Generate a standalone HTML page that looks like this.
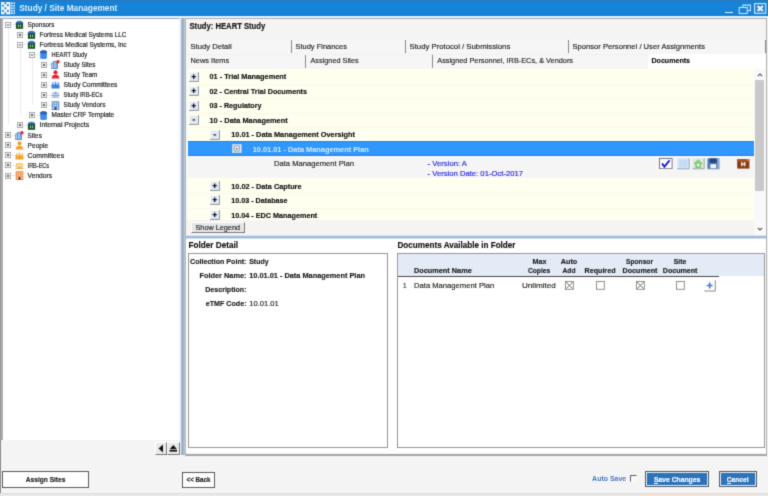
<!DOCTYPE html>
<html lang="en"><head><meta charset="utf-8"><title>Study / Site Management</title>
<style>
html,body{margin:0;padding:0;}
body{width:768px;height:496px;position:relative;overflow:hidden;background:#f4f4f4;font-family:"Liberation Sans",sans-serif;}
div,svg{position:absolute;box-sizing:border-box;}
svg text{white-space:pre;}
#labels{will-change:transform;}
#app{left:0;top:0;width:768px;height:496px;filter:url(#soft);}

.btn3d{background:#e9e9e9;border:1px solid;border-color:#fff #7a7a7a #7a7a7a #fff;}

</style></head><body>
<svg width="0" height="0" style="left:0;top:0"><defs><filter id="soft" x="0" y="0" width="100%" height="100%" color-interpolation-filters="sRGB"><feConvolveMatrix order="3" kernelMatrix="0.02 0.1 0.02 0.1 0.52 0.1 0.02 0.1 0.02" edgeMode="duplicate" preserveAlpha="true"/></filter></defs></svg>
<div id="app">
<div style="left:-4px;top:-4px;width:776px;height:504px;background:#f4f4f4;"></div>
<div style="left:-4px;top:-4px;width:776px;height:20px;background:#1683d8;"></div>
<div style="left:-4px;top:-4px;width:776px;height:5.3px;background:#2b78bf;"></div>
<div style="left:-4px;top:15.6px;width:776px;height:2.2px;background:#e6f0fb;"></div>
<svg style="left:1px;top:2px" width="14.2" height="12.6" viewBox="0 0 14.2 12.6"><rect x="0" y="0" width="9.4" height="12.4" fill="#eef6ff"/><rect x="0.95" y="2.75" width="1.9" height="1.9" fill="#3d86cc"/><rect x="5.95" y="2.25" width="1.9" height="1.9" fill="#3d86cc"/><rect x="3.3499999999999996" y="5.35" width="1.9" height="1.9" fill="#3d86cc"/><rect x="0.95" y="7.95" width="1.9" height="1.9" fill="#3d86cc"/><rect x="5.95" y="7.95" width="1.9" height="1.9" fill="#3d86cc"/><rect x="3.3499999999999996" y="0.25" width="1.9" height="1.9" fill="#3d86cc"/><rect x="3.3499999999999996" y="10.450000000000001" width="1.9" height="1.9" fill="#3d86cc"/><rect x="10" y="0.4" width="1.7" height="1.7" fill="#dcecfc"/><rect x="10" y="2.9" width="1.7" height="1.7" fill="#dcecfc"/><rect x="10" y="5.4" width="1.7" height="1.7" fill="#dcecfc"/><rect x="10" y="7.9" width="1.7" height="1.7" fill="#dcecfc"/><rect x="10" y="10.4" width="1.7" height="1.7" fill="#dcecfc"/><rect x="12.4" y="0.4" width="1.7" height="1.7" fill="#dcecfc"/><rect x="12.4" y="2.9" width="1.7" height="1.7" fill="#dcecfc"/><rect x="12.4" y="5.4" width="1.7" height="1.7" fill="#dcecfc"/><rect x="12.4" y="7.9" width="1.7" height="1.7" fill="#dcecfc"/><rect x="12.4" y="10.4" width="1.7" height="1.7" fill="#dcecfc"/></svg>
<div style="left:725.2px;top:11.6px;width:7.4px;height:1.8px;background:#d6ebff;"></div>
<svg style="left:738px;top:3.5px" width="14" height="11" viewBox="0 0 14 11" fill="none" stroke="#c4e2ff" stroke-width="1.1"><path d="M4.9 2.9V1.1H12.4V6.6H9.6"/><rect x="1.2" y="3.5" width="8" height="6"/></svg>
<svg style="left:753.8px;top:2.7px" width="13" height="11" viewBox="0 0 13 11"><rect x="0.6" y="0.6" width="11.2" height="9.7" fill="#2d82d0" stroke="#cfe8ff" stroke-width="1.1"/><path d="M3.6 3L8.8 7.9M8.8 3L3.6 7.9" stroke="#f4faff" stroke-width="2"/></svg>
<div style="left:-4px;top:17.8px;width:7px;height:421.8px;background:linear-gradient(90deg,#979797 4px,#b9b9b9);"></div>
<div style="left:-4px;top:439.5px;width:5px;height:54px;background:#8c8c8c;"></div>
<div style="left:2.5px;top:17.8px;width:177px;height:421.8px;background:#fff;border-top:1px solid #9aa9bd;border-right:1px solid #eef4fa;"></div>
<div style="left:179.5px;top:17.8px;width:6px;height:437px;background:linear-gradient(90deg,#e8f1fa 0,#dfe9f5 1.1px,#9fb2cf 1.6px,#97a9c7 2.6px,#a9b8cc 3.9px,#bcc7cc 4.4px,#cdd5d8 6px);"></div>
<div style="left:8px;top:27.5px;width:0.6px;height:97.7px;background:#ebebeb;"></div>
<div style="left:20px;top:47.64px;width:0.6px;height:67.49px;background:#ebebeb;"></div>
<div style="left:32px;top:57.71px;width:0.6px;height:47.35px;background:#ebebeb;"></div>
<div style="left:11px;top:24.2px;width:6px;height:0.6px;background:#e9e9e9;"></div>
<svg style="left:5.00px;top:21.50px" width="6" height="6" viewBox="0 0 6 6"><rect x="0.4" y="0.4" width="5.2" height="5.2" fill="#fff" stroke="#9c9c9c" stroke-width="0.8"/><path d="M1.7 3H4.3" stroke="#3a3a3a" stroke-width="0.9"/></svg>
<svg style="left:14.90px;top:20.00px" width="9" height="9" viewBox="0 0 9 9"><path d="M0.9 3.4V2.2Q4.5 -0.6 8.1 2.2V3.4Z" fill="#2f7fc4"/><rect x="0.9" y="3" width="7.2" height="5.8" fill="#1e4d24"/><rect x="2.9" y="4.6" width="1" height="2.6" fill="#a6d6a4"/><rect x="5.1" y="4.6" width="1" height="2.6" fill="#a6d6a4"/><rect x="0.9" y="2.6" width="7.2" height="0.9" fill="#1d64ae"/></svg>
<div style="left:23px;top:34.27px;width:6px;height:0.6px;background:#e9e9e9;"></div>
<svg style="left:17.00px;top:31.57px" width="6" height="6" viewBox="0 0 6 6"><rect x="0.4" y="0.4" width="5.2" height="5.2" fill="#fff" stroke="#9c9c9c" stroke-width="0.8"/><path d="M1.7 3H4.3" stroke="#3a3a3a" stroke-width="0.9"/><path d="M3 1.6V4.4" stroke="#333" stroke-width="0.9"/></svg>
<svg style="left:26.90px;top:30.07px" width="9" height="9" viewBox="0 0 9 9"><path d="M0.9 3.4V2.2Q4.5 -0.6 8.1 2.2V3.4Z" fill="#2f7fc4"/><rect x="0.9" y="3" width="7.2" height="5.8" fill="#1e4d24"/><rect x="2.9" y="4.6" width="1" height="2.6" fill="#a6d6a4"/><rect x="5.1" y="4.6" width="1" height="2.6" fill="#a6d6a4"/><rect x="0.9" y="2.6" width="7.2" height="0.9" fill="#1d64ae"/></svg>
<div style="left:23px;top:44.34px;width:6px;height:0.6px;background:#e9e9e9;"></div>
<svg style="left:17.00px;top:41.64px" width="6" height="6" viewBox="0 0 6 6"><rect x="0.4" y="0.4" width="5.2" height="5.2" fill="#fff" stroke="#9c9c9c" stroke-width="0.8"/><path d="M1.7 3H4.3" stroke="#3a3a3a" stroke-width="0.9"/></svg>
<svg style="left:26.90px;top:40.14px" width="9" height="9" viewBox="0 0 9 9"><path d="M0.9 3.4V2.2Q4.5 -0.6 8.1 2.2V3.4Z" fill="#2f7fc4"/><rect x="0.9" y="3" width="7.2" height="5.8" fill="#1e4d24"/><rect x="2.9" y="4.6" width="1" height="2.6" fill="#a6d6a4"/><rect x="5.1" y="4.6" width="1" height="2.6" fill="#a6d6a4"/><rect x="0.9" y="2.6" width="7.2" height="0.9" fill="#1d64ae"/></svg>
<div style="left:35px;top:54.410000000000004px;width:6px;height:0.6px;background:#e9e9e9;"></div>
<svg style="left:29.00px;top:51.71px" width="6" height="6" viewBox="0 0 6 6"><rect x="0.4" y="0.4" width="5.2" height="5.2" fill="#fff" stroke="#9c9c9c" stroke-width="0.8"/><path d="M1.7 3H4.3" stroke="#3a3a3a" stroke-width="0.9"/></svg>
<svg style="left:38.90px;top:50.21px" width="9" height="9" viewBox="0 0 9 9"><path d="M1.2 1.2Q4.5 -0.8 7.9 1.2V8.4Q4.5 9.8 1.2 8.4Z" fill="#4489ec"/><path d="M1.2 1.2Q4.5 -0.8 7.9 1.2V2.9Q4.5 4 1.2 2.9Z" fill="#2c5fb4"/></svg>
<div style="left:47px;top:64.48px;width:6px;height:0.6px;background:#e9e9e9;"></div>
<svg style="left:41.00px;top:61.78px" width="6" height="6" viewBox="0 0 6 6"><rect x="0.4" y="0.4" width="5.2" height="5.2" fill="#fff" stroke="#9c9c9c" stroke-width="0.8"/><path d="M1.7 3H4.3" stroke="#3a3a3a" stroke-width="0.9"/><path d="M3 1.6V4.4" stroke="#333" stroke-width="0.9"/></svg>
<svg style="left:50.90px;top:60.28px" width="9" height="9" viewBox="0 0 9 9"><rect x="0.8" y="3" width="5.6" height="5.6" fill="#cfe2f7" stroke="#4a86cf" stroke-width="0.9"/><rect x="2.6" y="1.4" width="2.6" height="7" fill="#9cc3ee" stroke="#4a86cf" stroke-width="0.7"/><circle cx="7" cy="1.8" r="1.7" fill="#e8222e"/></svg>
<div style="left:47px;top:74.55px;width:6px;height:0.6px;background:#e9e9e9;"></div>
<svg style="left:41.00px;top:71.85px" width="6" height="6" viewBox="0 0 6 6"><rect x="0.4" y="0.4" width="5.2" height="5.2" fill="#fff" stroke="#9c9c9c" stroke-width="0.8"/><path d="M1.7 3H4.3" stroke="#3a3a3a" stroke-width="0.9"/><path d="M3 1.6V4.4" stroke="#333" stroke-width="0.9"/></svg>
<svg style="left:50.90px;top:70.35px" width="9" height="9" viewBox="0 0 9 9"><circle cx="4.5" cy="2.4" r="2.1" fill="#e8202a"/><path d="M0.6 8.6Q0.8 4.8 4.5 4.8Q8.2 4.8 8.4 8.6Z" fill="#e8202a"/></svg>
<div style="left:47px;top:84.62px;width:6px;height:0.6px;background:#e9e9e9;"></div>
<svg style="left:41.00px;top:81.92px" width="6" height="6" viewBox="0 0 6 6"><rect x="0.4" y="0.4" width="5.2" height="5.2" fill="#fff" stroke="#9c9c9c" stroke-width="0.8"/><path d="M1.7 3H4.3" stroke="#3a3a3a" stroke-width="0.9"/><path d="M3 1.6V4.4" stroke="#333" stroke-width="0.9"/></svg>
<svg style="left:50.90px;top:80.42px" width="9" height="9" viewBox="0 0 9 9"><path d="M0.5 8.5V5.6L1.7 2.8L2.9 5.2L4.5 2L6.1 5.2L7.3 2.8L8.5 5.6V8.5Z" fill="#3f7fd6"/><circle cx="1.7" cy="3.3" r="1" fill="#7fa9e6"/><circle cx="4.5" cy="2.6" r="1.1" fill="#7fa9e6"/><circle cx="7.3" cy="3.3" r="1" fill="#7fa9e6"/></svg>
<div style="left:47px;top:94.69000000000001px;width:6px;height:0.6px;background:#e9e9e9;"></div>
<svg style="left:41.00px;top:91.99px" width="6" height="6" viewBox="0 0 6 6"><rect x="0.4" y="0.4" width="5.2" height="5.2" fill="#fff" stroke="#9c9c9c" stroke-width="0.8"/><path d="M1.7 3H4.3" stroke="#3a3a3a" stroke-width="0.9"/><path d="M3 1.6V4.4" stroke="#333" stroke-width="0.9"/></svg>
<svg style="left:50.90px;top:90.49px" width="9" height="9" viewBox="0 0 9 9"><circle cx="4.5" cy="3" r="1.3" fill="#6f98d4"/><circle cx="1.9" cy="3.3" r="1" fill="#a9c0e2"/><circle cx="7.1" cy="3.3" r="1" fill="#a9c0e2"/><rect x="0.6" y="4.7" width="7.8" height="1.2" fill="#6f98d4"/><path d="M0.4 7.9Q0.8 6 4.5 6Q8.2 6 8.6 7.9Z" fill="#a9c0e2"/></svg>
<div style="left:47px;top:104.76px;width:6px;height:0.6px;background:#e9e9e9;"></div>
<svg style="left:41.00px;top:102.06px" width="6" height="6" viewBox="0 0 6 6"><rect x="0.4" y="0.4" width="5.2" height="5.2" fill="#fff" stroke="#9c9c9c" stroke-width="0.8"/><path d="M1.7 3H4.3" stroke="#3a3a3a" stroke-width="0.9"/><path d="M3 1.6V4.4" stroke="#333" stroke-width="0.9"/></svg>
<svg style="left:50.90px;top:100.56px" width="9" height="9" viewBox="0 0 9 9"><rect x="1.2" y="0.8" width="6.6" height="7.8" fill="#dbe8f8" stroke="#4a7fc4" stroke-width="0.9"/><path d="M3.4 0.8V8.6M5.6 0.8V8.6M1.2 3.2H7.8M1.2 5.6H7.8" stroke="#4a7fc4" stroke-width="0.6"/><rect x="3.6" y="6.2" width="1.8" height="2.4" fill="#22324a"/></svg>
<div style="left:35px;top:114.83px;width:6px;height:0.6px;background:#e9e9e9;"></div>
<svg style="left:29.00px;top:112.13px" width="6" height="6" viewBox="0 0 6 6"><rect x="0.4" y="0.4" width="5.2" height="5.2" fill="#fff" stroke="#9c9c9c" stroke-width="0.8"/><path d="M1.7 3H4.3" stroke="#3a3a3a" stroke-width="0.9"/><path d="M3 1.6V4.4" stroke="#333" stroke-width="0.9"/></svg>
<svg style="left:38.90px;top:110.63px" width="9" height="9" viewBox="0 0 9 9"><path d="M1.2 1.2Q4.5 -0.8 7.9 1.2V8.4Q4.5 9.8 1.2 8.4Z" fill="#4489ec"/><path d="M1.2 1.2Q4.5 -0.8 7.9 1.2V2.9Q4.5 4 1.2 2.9Z" fill="#2c5fb4"/></svg>
<div style="left:23px;top:124.9px;width:6px;height:0.6px;background:#e9e9e9;"></div>
<svg style="left:17.00px;top:122.20px" width="6" height="6" viewBox="0 0 6 6"><rect x="0.4" y="0.4" width="5.2" height="5.2" fill="#fff" stroke="#9c9c9c" stroke-width="0.8"/><path d="M1.7 3H4.3" stroke="#3a3a3a" stroke-width="0.9"/><path d="M3 1.6V4.4" stroke="#333" stroke-width="0.9"/></svg>
<svg style="left:26.90px;top:120.70px" width="9" height="9" viewBox="0 0 9 9"><path d="M0.9 3.4V2.2Q4.5 -0.6 8.1 2.2V3.4Z" fill="#2f7fc4"/><rect x="0.9" y="3" width="7.2" height="5.8" fill="#1e4d24"/><rect x="2.9" y="4.6" width="1" height="2.6" fill="#a6d6a4"/><rect x="5.1" y="4.6" width="1" height="2.6" fill="#a6d6a4"/><rect x="0.9" y="2.6" width="7.2" height="0.9" fill="#1d64ae"/></svg>
<div style="left:11px;top:134.97px;width:6px;height:0.6px;background:#e9e9e9;"></div>
<svg style="left:5.00px;top:132.27px" width="6" height="6" viewBox="0 0 6 6"><rect x="0.4" y="0.4" width="5.2" height="5.2" fill="#fff" stroke="#9c9c9c" stroke-width="0.8"/><path d="M1.7 3H4.3" stroke="#3a3a3a" stroke-width="0.9"/><path d="M3 1.6V4.4" stroke="#333" stroke-width="0.9"/></svg>
<svg style="left:14.90px;top:130.77px" width="9" height="9" viewBox="0 0 9 9"><rect x="0.8" y="3" width="5.6" height="5.6" fill="#cfe2f7" stroke="#4a86cf" stroke-width="0.9"/><rect x="2.6" y="1.4" width="2.6" height="7" fill="#9cc3ee" stroke="#4a86cf" stroke-width="0.7"/><circle cx="7" cy="1.8" r="1.7" fill="#e8222e"/></svg>
<div style="left:11px;top:145.04px;width:6px;height:0.6px;background:#e9e9e9;"></div>
<svg style="left:5.00px;top:142.34px" width="6" height="6" viewBox="0 0 6 6"><rect x="0.4" y="0.4" width="5.2" height="5.2" fill="#fff" stroke="#9c9c9c" stroke-width="0.8"/><path d="M1.7 3H4.3" stroke="#3a3a3a" stroke-width="0.9"/><path d="M3 1.6V4.4" stroke="#333" stroke-width="0.9"/></svg>
<svg style="left:14.90px;top:140.84px" width="9" height="9" viewBox="0 0 9 9"><circle cx="4.5" cy="2.4" r="2.1" fill="#f2a030"/><path d="M0.6 8.6Q0.8 4.8 4.5 4.8Q8.2 4.8 8.4 8.6Z" fill="#f2a030"/></svg>
<div style="left:11px;top:155.10999999999999px;width:6px;height:0.6px;background:#e9e9e9;"></div>
<svg style="left:5.00px;top:152.41px" width="6" height="6" viewBox="0 0 6 6"><rect x="0.4" y="0.4" width="5.2" height="5.2" fill="#fff" stroke="#9c9c9c" stroke-width="0.8"/><path d="M1.7 3H4.3" stroke="#3a3a3a" stroke-width="0.9"/><path d="M3 1.6V4.4" stroke="#333" stroke-width="0.9"/></svg>
<svg style="left:14.90px;top:150.91px" width="9" height="9" viewBox="0 0 9 9"><path d="M0.5 8.5V5.6L1.7 2.8L2.9 5.2L4.5 2L6.1 5.2L7.3 2.8L8.5 5.6V8.5Z" fill="#f2a22e"/><circle cx="1.7" cy="3.3" r="1" fill="#f6bd62"/><circle cx="4.5" cy="2.6" r="1.1" fill="#f6bd62"/><circle cx="7.3" cy="3.3" r="1" fill="#f6bd62"/></svg>
<div style="left:11px;top:165.18px;width:6px;height:0.6px;background:#e9e9e9;"></div>
<svg style="left:5.00px;top:162.48px" width="6" height="6" viewBox="0 0 6 6"><rect x="0.4" y="0.4" width="5.2" height="5.2" fill="#fff" stroke="#9c9c9c" stroke-width="0.8"/><path d="M1.7 3H4.3" stroke="#3a3a3a" stroke-width="0.9"/><path d="M3 1.6V4.4" stroke="#333" stroke-width="0.9"/></svg>
<svg style="left:14.90px;top:160.98px" width="9" height="9" viewBox="0 0 9 9"><circle cx="4.5" cy="3" r="1.3" fill="#f6c070"/><circle cx="1.9" cy="3.3" r="1" fill="#f4ae48"/><circle cx="7.1" cy="3.3" r="1" fill="#f4ae48"/><rect x="0.6" y="4.7" width="7.8" height="1.2" fill="#f6c070"/><path d="M0.4 7.9Q0.8 6 4.5 6Q8.2 6 8.6 7.9Z" fill="#f4ae48"/></svg>
<div style="left:11px;top:175.25px;width:6px;height:0.6px;background:#e9e9e9;"></div>
<svg style="left:5.00px;top:172.55px" width="6" height="6" viewBox="0 0 6 6"><rect x="0.4" y="0.4" width="5.2" height="5.2" fill="#fff" stroke="#9c9c9c" stroke-width="0.8"/><path d="M1.7 3H4.3" stroke="#3a3a3a" stroke-width="0.9"/><path d="M3 1.6V4.4" stroke="#333" stroke-width="0.9"/></svg>
<svg style="left:14.90px;top:171.05px" width="9" height="9" viewBox="0 0 9 9"><rect x="1.2" y="0.8" width="6.6" height="7.8" fill="#fbd9b8" stroke="#e9772a" stroke-width="0.9"/><path d="M3.4 0.8V8.6M5.6 0.8V8.6M1.2 3.2H7.8M1.2 5.6H7.8" stroke="#e9772a" stroke-width="0.6"/><rect x="3.6" y="6.2" width="1.8" height="2.4" fill="#22324a"/></svg>
<div class="btn3d" style="left:155px;top:441.5px;width:12px;height:13px;"></div>
<div class="btn3d" style="left:167px;top:441.5px;width:12.5px;height:13px;"></div>
<svg style="left:155px;top:441.5px" width="25" height="13" viewBox="0 0 25 13"><path d="M8 2.6V10.4L3.6 6.5Z" fill="#111"/><path d="M14.6 7.2L18.3 3L22 7.2Z" fill="#111"/><rect x="14.6" y="8" width="7.4" height="1.6" fill="#111"/></svg>
<div style="left:2.2px;top:471.3px;width:87.3px;height:16.3px;background:#fff;border:1px solid #5a5a5a;"></div>
<div style="left:181.5px;top:471.5px;width:33.3px;height:16px;background:#fff;border:1px solid #5a5a5a;"></div>
<div style="left:-4px;top:493px;width:776px;height:7px;background:#e9e9e9;border-top:1px solid #dcdcdc;"></div>
<div style="left:640px;top:494.4px;width:117px;height:5.6px;background:#f4e3d8;"></div>
<div style="left:185px;top:18px;width:582px;height:437.5px;background:#f5f4f3;border:1px solid #b0b0b0;border-left-color:#b2b6b8;border-bottom:2.6px solid #a6a6a6;"></div>
<div style="left:186px;top:39.5px;width:580px;height:14.7px;background:#f6f6f6;"></div>
<div style="left:186px;top:54.2px;width:580px;height:14.8px;background:#f6f6f6;border-top:1px solid #f1f1f1;"></div>
<div style="left:290.7px;top:40px;width:1px;height:13.2px;background:#8a8a8a;"></div>
<div style="left:404.7px;top:40px;width:1px;height:13.2px;background:#8a8a8a;"></div>
<div style="left:567.7px;top:40px;width:1px;height:13.2px;background:#8a8a8a;"></div>
<div style="left:764.7px;top:40px;width:1px;height:13.2px;background:#8a8a8a;"></div>
<div style="left:305.2px;top:54.6px;width:1px;height:13.2px;background:#8a8a8a;"></div>
<div style="left:432.2px;top:54.6px;width:1px;height:13.2px;background:#8a8a8a;"></div>
<div style="left:648px;top:54.4px;width:117.5px;height:15px;background:#fff;"></div>
<div style="left:186px;top:69px;width:2px;height:151px;background:#f6f9fc;"></div>
<div style="left:188px;top:69px;width:566px;height:151px;background:#fffff0;"></div>
<div style="left:754px;top:69px;width:12px;height:166px;background:#f9f9f9;"></div>
<div style="left:755px;top:80px;width:9px;height:111px;background:#c9c9c9;"></div>
<svg style="left:756px;top:72px" width="8" height="6" viewBox="0 0 8 6"><path d="M1.8 4.2L4 2L6.2 4.2" stroke="#5a5a5a" stroke-width="1.1" fill="none"/></svg>
<svg style="left:756px;top:225.5px" width="8" height="6" viewBox="0 0 8 6"><path d="M1.8 1.8L4 4L6.2 1.8" stroke="#5a5a5a" stroke-width="1.1" fill="none"/></svg>
<div style="left:188px;top:83.85px;width:566px;height:0.7px;background:#fafaec;"></div>
<div style="left:188px;top:98.35px;width:566px;height:0.7px;background:#fafaec;"></div>
<div style="left:188px;top:112.85px;width:566px;height:0.7px;background:#fafaec;"></div>
<div style="left:188px;top:127.35px;width:566px;height:0.7px;background:#fafaec;"></div>
<div style="left:188px;top:141.85px;width:566px;height:0.7px;background:#fafaec;"></div>
<div style="left:188px;top:193.35px;width:566px;height:0.7px;background:#fafaec;"></div>
<div style="left:188px;top:207.7px;width:566px;height:0.7px;background:#fafaec;"></div>
<svg style="left:188.6px;top:71.55px" width="10" height="10" viewBox="0 0 10 10"><rect x="0" y="0" width="9.6" height="9.4" fill="#e5e9ef"/><path d="M0 9.4H9.6V0" stroke="#8d949e" stroke-width="1" fill="none"/><path d="M0.3 9V0.3H9.2" stroke="#fff" stroke-width="0.8" fill="none"/><path d="M2.6 4.7H6.8M4.7 2.4V7" stroke="#0a1a3a" stroke-width="1.3"/></svg>
<svg style="left:188.6px;top:86.05px" width="10" height="10" viewBox="0 0 10 10"><rect x="0" y="0" width="9.6" height="9.4" fill="#e5e9ef"/><path d="M0 9.4H9.6V0" stroke="#8d949e" stroke-width="1" fill="none"/><path d="M0.3 9V0.3H9.2" stroke="#fff" stroke-width="0.8" fill="none"/><path d="M2.6 4.7H6.8M4.7 2.4V7" stroke="#0a1a3a" stroke-width="1.3"/></svg>
<svg style="left:188.6px;top:100.55px" width="10" height="10" viewBox="0 0 10 10"><rect x="0" y="0" width="9.6" height="9.4" fill="#e5e9ef"/><path d="M0 9.4H9.6V0" stroke="#8d949e" stroke-width="1" fill="none"/><path d="M0.3 9V0.3H9.2" stroke="#fff" stroke-width="0.8" fill="none"/><path d="M2.6 4.7H6.8M4.7 2.4V7" stroke="#0a1a3a" stroke-width="1.3"/></svg>
<svg style="left:188.6px;top:115.05px" width="10" height="10" viewBox="0 0 10 10"><rect x="0" y="0" width="9.6" height="9.4" fill="#e5e9ef"/><path d="M0 9.4H9.6V0" stroke="#8d949e" stroke-width="1" fill="none"/><path d="M0.3 9V0.3H9.2" stroke="#fff" stroke-width="0.8" fill="none"/><path d="M3.5 4.9H6.1" stroke="#0a1a3a" stroke-width="1.2"/></svg>
<svg style="left:210.1px;top:129.55px" width="10" height="10" viewBox="0 0 10 10"><rect x="0" y="0" width="9.6" height="9.4" fill="#e5e9ef"/><path d="M0 9.4H9.6V0" stroke="#8d949e" stroke-width="1" fill="none"/><path d="M0.3 9V0.3H9.2" stroke="#fff" stroke-width="0.8" fill="none"/><path d="M3.5 4.9H6.1" stroke="#0a1a3a" stroke-width="1.2"/></svg>
<svg style="left:210.1px;top:181.05px" width="10" height="10" viewBox="0 0 10 10"><rect x="0" y="0" width="9.6" height="9.4" fill="#e5e9ef"/><path d="M0 9.4H9.6V0" stroke="#8d949e" stroke-width="1" fill="none"/><path d="M0.3 9V0.3H9.2" stroke="#fff" stroke-width="0.8" fill="none"/><path d="M2.6 4.7H6.8M4.7 2.4V7" stroke="#0a1a3a" stroke-width="1.3"/></svg>
<svg style="left:210.1px;top:195.4px" width="10" height="10" viewBox="0 0 10 10"><rect x="0" y="0" width="9.6" height="9.4" fill="#e5e9ef"/><path d="M0 9.4H9.6V0" stroke="#8d949e" stroke-width="1" fill="none"/><path d="M0.3 9V0.3H9.2" stroke="#fff" stroke-width="0.8" fill="none"/><path d="M2.6 4.7H6.8M4.7 2.4V7" stroke="#0a1a3a" stroke-width="1.3"/></svg>
<svg style="left:210.1px;top:209.8px" width="10" height="10" viewBox="0 0 10 10"><rect x="0" y="0" width="9.6" height="9.4" fill="#e5e9ef"/><path d="M0 9.4H9.6V0" stroke="#8d949e" stroke-width="1" fill="none"/><path d="M0.3 9V0.3H9.2" stroke="#fff" stroke-width="0.8" fill="none"/><path d="M2.6 4.7H6.8M4.7 2.4V7" stroke="#0a1a3a" stroke-width="1.3"/></svg>
<div style="left:188px;top:141.3px;width:566px;height:14.3px;background:#3097fd;border-top:0.7px solid #2c84dc;border-bottom:0.7px solid #2c84dc;"></div>
<svg style="left:231.5px;top:144.3px" width="10" height="9" viewBox="0 0 10 9"><rect x="0.4" y="0.4" width="8.8" height="8.2" fill="#e9eef5" stroke="#c8d4e4" stroke-width="0.8"/><rect x="2.2" y="2" width="5" height="5" fill="#fff" stroke="#6a7fa0" stroke-width="0.8"/><path d="M3.4 4.2H6.2L4.8 5.8Z" fill="#223a6a"/></svg>
<div style="left:188px;top:155.7px;width:566px;height:22.3px;background:#f5f5f5;"></div>
<svg style="left:659px;top:157.5px" width="14" height="11.5" viewBox="0 0 14 11.5"><rect x="0.5" y="0.5" width="12.6" height="10.2" fill="#fff" stroke="#6c6c78" stroke-width="0.9"/><path d="M3 5.4L5.4 8.6L10.6 2.4" stroke="#2020cc" stroke-width="1.9" fill="none"/></svg>
<svg style="left:677px;top:158px" width="13" height="11.5" viewBox="0 0 13 11.5"><rect x="0.3" y="0.3" width="11.8" height="10.4" fill="#d9e8f8"/><rect x="1.8" y="1.6" width="8.6" height="7.6" fill="#c3dcf6"/><path d="M0.3 10.8H12.2V0.3" stroke="#98a4b2" stroke-width="1" fill="none"/></svg>
<svg style="left:692px;top:158px" width="13" height="11.5" viewBox="0 0 13 11.5"><rect x="0.3" y="0.3" width="11.8" height="10.4" fill="#e3eadf"/><path d="M6.2 1.8L10.2 5.6H8.6V9.4H3.8V5.6H2.2Z" fill="#86d67e" stroke="#58b254" stroke-width="0.6"/><rect x="5" y="6" width="2.4" height="2.2" fill="#eef8ec"/><path d="M0.3 10.8H12.2V0.3" stroke="#98a49c" stroke-width="1" fill="none"/></svg>
<svg style="left:707px;top:158px" width="13" height="11.5" viewBox="0 0 13 11.5"><rect x="0.4" y="0.4" width="12" height="10.4" fill="#4a7cc4"/><rect x="2.8" y="0.4" width="6.8" height="4.4" fill="#24457c"/><rect x="3.4" y="6.2" width="5.8" height="4" fill="#f2f6fb"/><rect x="10.6" y="0.4" width="1.8" height="10.4" fill="#9db6d8"/><path d="M0.4 10.9H12.4" stroke="#8a98ac" stroke-width="0.8"/></svg>
<svg style="left:737px;top:158.6px" width="13" height="10" viewBox="0 0 13 10"><rect x="0.2" y="0.2" width="12.2" height="9.4" fill="#8b3a12"/><rect x="0.2" y="0.2" width="12.2" height="2.4" fill="#aa531f"/><path d="M9.6 0.2H12.4V3Z" fill="#d9a37c"/><path d="M4.8 3V7.2M7.8 3V7.2M4.8 5.1H7.8" stroke="#fff" stroke-width="1.2"/></svg>
<div class="btn3d" style="left:191px;top:221.7px;width:53.6px;height:11.2px;background:#e6e6e6;"></div>
<div style="left:186px;top:234.5px;width:580px;height:4.3px;background:linear-gradient(180deg,#e9eef5 0,#bfd3ec 30%,#7fa3cf 50%,#9fbbe0 65%,#f2f6fb 100%);"></div>
<div style="left:186px;top:238.5px;width:580px;height:214px;background:#fff;"></div>
<div style="left:188px;top:253.3px;width:199.8px;height:195px;background:#fff;border:1px solid #969696;"></div>
<div style="left:397px;top:253.3px;width:368.2px;height:195px;background:#fff;border:1px solid #969696;"></div>
<div style="left:398px;top:254.3px;width:366.2px;height:22px;background:#e3ebf6;"></div>
<div style="left:398px;top:275.8px;width:320.5px;height:1px;background:#4a4a4a;"></div>
<svg style="left:565.2px;top:280.7px" width="9" height="9" viewBox="0 0 9 9"><rect x="0.5" y="0.5" width="7.8" height="7.8" fill="#fff" stroke="#858585" stroke-width="0.9"/><path d="M1.2 1.2L7.6 7.6M7.6 1.2L1.2 7.6" stroke="#4a4a4a" stroke-width="0.8"/></svg>
<svg style="left:596px;top:280.7px" width="9" height="9" viewBox="0 0 9 9"><rect x="0.5" y="0.5" width="7.8" height="7.8" fill="#fff" stroke="#858585" stroke-width="0.9"/></svg>
<svg style="left:635.7px;top:280.7px" width="9" height="9" viewBox="0 0 9 9"><rect x="0.5" y="0.5" width="7.8" height="7.8" fill="#fff" stroke="#858585" stroke-width="0.9"/><path d="M1.2 1.2L7.6 7.6M7.6 1.2L1.2 7.6" stroke="#4a4a4a" stroke-width="0.8"/></svg>
<svg style="left:675.7px;top:280.7px" width="9" height="9" viewBox="0 0 9 9"><rect x="0.5" y="0.5" width="7.8" height="7.8" fill="#fff" stroke="#858585" stroke-width="0.9"/></svg>
<svg style="left:704.3px;top:279.8px" width="12" height="12" viewBox="0 0 12 12"><rect x="0" y="0" width="11.6" height="11.4" fill="#fdfdfd"/><path d="M0.3 11H11.3V0.3" stroke="#8a8a8a" stroke-width="1" fill="none"/><path d="M2.8 5.4H8.6M5.7 2.4V8.4" stroke="#3f78d0" stroke-width="1.5"/></svg>
<div style="left:629.7px;top:475px;width:7.2px;height:6.6px;background:#f7f7f7;border:1px solid;border-color:#606060 #f9f9f9 #f9f9f9 #606060;"></div>
<div style="left:644.6px;top:471.4px;width:64.8px;height:16px;background:#2d73ba;border:1px solid #505860;box-shadow:inset 0 0 0 1px #e4edf8;"></div>
<div style="left:654.3px;top:482.6px;width:3.6px;height:0.7px;background:#fff;"></div>
<div style="left:718.9px;top:471.4px;width:37.8px;height:16px;background:#2d73ba;border:1px solid #505860;box-shadow:inset 0 0 0 1px #e4edf8;"></div>
<div style="left:727.05px;top:482.6px;width:3.6px;height:0.7px;background:#fff;"></div>
<svg id="labels" style="left:0;top:0" width="768" height="496" viewBox="0 0 768 496" font-family="Liberation Sans, sans-serif">
<text x="19.30" y="11" font-size="9.25" fill="#dcefff" textLength="98.00" lengthAdjust="spacingAndGlyphs" font-weight="bold">Study / Site Management</text>
<text x="27.60" y="27" font-size="7" fill="#262626" textLength="26.75" lengthAdjust="spacingAndGlyphs" stroke="#262626" stroke-width="0.2">Sponsors</text>
<text x="39.60" y="37" font-size="7" fill="#262626" textLength="86.75" lengthAdjust="spacingAndGlyphs" stroke="#262626" stroke-width="0.2">Fortress Medical Systems LLC</text>
<text x="39.60" y="47" font-size="7" fill="#262626" textLength="87.00" lengthAdjust="spacingAndGlyphs" stroke="#262626" stroke-width="0.2">Fortress Medical Systems, Inc</text>
<text x="51.60" y="57" font-size="7" fill="#262626" textLength="35.50" lengthAdjust="spacingAndGlyphs" stroke="#262626" stroke-width="0.2">HEART Study</text>
<text x="63.60" y="67" font-size="7" fill="#262626" textLength="31.75" lengthAdjust="spacingAndGlyphs" stroke="#262626" stroke-width="0.2">Study Sites</text>
<text x="63.60" y="77" font-size="7" fill="#262626" textLength="33.75" lengthAdjust="spacingAndGlyphs" stroke="#262626" stroke-width="0.2">Study Team</text>
<text x="63.60" y="87" font-size="7" fill="#262626" textLength="53.75" lengthAdjust="spacingAndGlyphs" stroke="#262626" stroke-width="0.2">Study Committees</text>
<text x="63.60" y="97" font-size="7" fill="#262626" textLength="38.75" lengthAdjust="spacingAndGlyphs" stroke="#262626" stroke-width="0.2">Study IRB-ECs</text>
<text x="63.60" y="107" font-size="7" fill="#262626" textLength="41.75" lengthAdjust="spacingAndGlyphs" stroke="#262626" stroke-width="0.2">Study Vendors</text>
<text x="51.60" y="117" font-size="7" fill="#262626" textLength="62.50" lengthAdjust="spacingAndGlyphs" stroke="#262626" stroke-width="0.2">Master CRF Template</text>
<text x="39.60" y="127" font-size="7" fill="#262626" textLength="49.50" lengthAdjust="spacingAndGlyphs" stroke="#262626" stroke-width="0.2">Internal Projects</text>
<text x="27.60" y="138" font-size="7" fill="#262626" textLength="14.25" lengthAdjust="spacingAndGlyphs" stroke="#262626" stroke-width="0.2">Sites</text>
<text x="27.60" y="148" font-size="7" fill="#262626" textLength="20.50" lengthAdjust="spacingAndGlyphs" stroke="#262626" stroke-width="0.2">People</text>
<text x="27.60" y="158" font-size="7" fill="#262626" textLength="36.50" lengthAdjust="spacingAndGlyphs" stroke="#262626" stroke-width="0.2">Committees</text>
<text x="27.60" y="168" font-size="7" fill="#262626" textLength="21.50" lengthAdjust="spacingAndGlyphs" stroke="#262626" stroke-width="0.2">IRB-ECs</text>
<text x="27.60" y="178" font-size="7" fill="#262626" textLength="24.50" lengthAdjust="spacingAndGlyphs" stroke="#262626" stroke-width="0.2">Vendors</text>
<text x="25.80" y="482" font-size="8" fill="#1a1a1a" textLength="39.60" lengthAdjust="spacingAndGlyphs" font-weight="bold" stroke="#1a1a1a" stroke-width="0.16">Assign Sites</text>
<text x="186.50" y="482" font-size="8" fill="#1a1a1a" textLength="24.00" lengthAdjust="spacingAndGlyphs" font-weight="bold" stroke="#1a1a1a" stroke-width="0.16">&lt;&lt; Back</text>
<text x="189.50" y="29" font-size="9.25" fill="#111" textLength="75.75" lengthAdjust="spacingAndGlyphs" font-weight="bold" stroke="#111" stroke-width="0.16">Study: HEART Study</text>
<text x="190.50" y="49" font-size="8" fill="#1c1c1c" textLength="41.20" lengthAdjust="spacingAndGlyphs" stroke="#1c1c1c" stroke-width="0.14">Study Detail</text>
<text x="295.50" y="49" font-size="8" fill="#1c1c1c" textLength="51.50" lengthAdjust="spacingAndGlyphs" stroke="#1c1c1c" stroke-width="0.14">Study Finances</text>
<text x="409.50" y="49" font-size="8" fill="#1c1c1c" textLength="100.80" lengthAdjust="spacingAndGlyphs" stroke="#1c1c1c" stroke-width="0.14">Study Protocol / Submissions</text>
<text x="572.50" y="49" font-size="8" fill="#1c1c1c" textLength="132.50" lengthAdjust="spacingAndGlyphs" stroke="#1c1c1c" stroke-width="0.14">Sponsor Personnel / User Assignments</text>
<text x="190.50" y="63" font-size="8" fill="#1c1c1c" textLength="38.70" lengthAdjust="spacingAndGlyphs" stroke="#1c1c1c" stroke-width="0.14">News Items</text>
<text x="310.50" y="63" font-size="8" fill="#1c1c1c" textLength="48.25" lengthAdjust="spacingAndGlyphs" stroke="#1c1c1c" stroke-width="0.14">Assigned Sites</text>
<text x="437.25" y="63" font-size="8" fill="#1c1c1c" textLength="135.75" lengthAdjust="spacingAndGlyphs" stroke="#1c1c1c" stroke-width="0.14">Assigned Personnel, IRB-ECs, &amp; Vendors</text>
<text x="651.50" y="63" font-size="7.75" fill="#111" textLength="38.50" lengthAdjust="spacingAndGlyphs" font-weight="bold" stroke="#111" stroke-width="0.16">Documents</text>
<text x="209.50" y="79" font-size="7.75" fill="#111" textLength="76.75" lengthAdjust="spacingAndGlyphs" font-weight="bold" stroke="#111" stroke-width="0.16">01 - Trial Management</text>
<text x="209.50" y="94" font-size="7.75" fill="#111" textLength="97.50" lengthAdjust="spacingAndGlyphs" font-weight="bold" stroke="#111" stroke-width="0.16">02 - Central Trial Documents</text>
<text x="209.50" y="108" font-size="7.75" fill="#111" textLength="52.00" lengthAdjust="spacingAndGlyphs" font-weight="bold" stroke="#111" stroke-width="0.16">03 - Regulatory</text>
<text x="209.50" y="123" font-size="7.75" fill="#111" textLength="78.25" lengthAdjust="spacingAndGlyphs" font-weight="bold" stroke="#111" stroke-width="0.16">10 - Data Management</text>
<text x="231.25" y="137" font-size="7.75" fill="#111" textLength="123.75" lengthAdjust="spacingAndGlyphs" font-weight="bold" stroke="#111" stroke-width="0.16">10.01 - Data Management Oversight</text>
<text x="231.25" y="189" font-size="7.75" fill="#111" textLength="70.25" lengthAdjust="spacingAndGlyphs" font-weight="bold" stroke="#111" stroke-width="0.16">10.02 - Data Capture</text>
<text x="231.25" y="203" font-size="7.75" fill="#111" textLength="56.25" lengthAdjust="spacingAndGlyphs" font-weight="bold" stroke="#111" stroke-width="0.16">10.03 - Database</text>
<text x="231.25" y="218" font-size="7.75" fill="#111" textLength="86.00" lengthAdjust="spacingAndGlyphs" font-weight="bold" stroke="#111" stroke-width="0.16">10.04 - EDC Management</text>
<text x="252.75" y="152" font-size="7.75" fill="#d6ebff" textLength="116.00" lengthAdjust="spacingAndGlyphs" font-weight="bold">10.01.01 - Data Management Plan</text>
<text x="274.00" y="166" font-size="8" fill="#1c1c1c" textLength="80.00" lengthAdjust="spacingAndGlyphs" stroke="#1c1c1c" stroke-width="0.14">Data Management Plan</text>
<text x="427.50" y="166" font-size="8" fill="#3030e0" textLength="39.50" lengthAdjust="spacingAndGlyphs" stroke="#3030e0" stroke-width="0.2">- Version: A</text>
<text x="427.50" y="176" font-size="8" fill="#3030e0" textLength="95.50" lengthAdjust="spacingAndGlyphs" stroke="#3030e0" stroke-width="0.2">- Version Date: 01-Oct-2017</text>
<text x="195.50" y="230" font-size="8" fill="#1c1c1c" textLength="44.50" lengthAdjust="spacingAndGlyphs" stroke="#1c1c1c" stroke-width="0.14">Show Legend</text>
<text x="188.50" y="248" font-size="9.25" fill="#111" textLength="49.50" lengthAdjust="spacingAndGlyphs" font-weight="bold" stroke="#111" stroke-width="0.16">Folder Detail</text>
<text x="397.50" y="248" font-size="9.25" fill="#111" textLength="118.00" lengthAdjust="spacingAndGlyphs" font-weight="bold" stroke="#111" stroke-width="0.16">Documents Available in Folder</text>
<text x="190.00" y="264" font-size="7.75" fill="#1a1a1a" textLength="56.50" lengthAdjust="spacingAndGlyphs" font-weight="bold" stroke="#1a1a1a" stroke-width="0.16">Collection Point:</text>
<text x="249.25" y="264" font-size="7.75" fill="#1a1a1a" textLength="19.25" lengthAdjust="spacingAndGlyphs" font-weight="bold" stroke="#1a1a1a" stroke-width="0.16">Study</text>
<text x="199.50" y="278" font-size="7.75" fill="#1a1a1a" textLength="47.00" lengthAdjust="spacingAndGlyphs" font-weight="bold" stroke="#1a1a1a" stroke-width="0.16">Folder Name:</text>
<text x="249.25" y="278" font-size="7.75" fill="#1a1a1a" textLength="115.75" lengthAdjust="spacingAndGlyphs" font-weight="bold" stroke="#1a1a1a" stroke-width="0.16">10.01.01 - Data Management Plan</text>
<text x="205.25" y="292" font-size="7.75" fill="#1a1a1a" textLength="41.25" lengthAdjust="spacingAndGlyphs" font-weight="bold" stroke="#1a1a1a" stroke-width="0.16">Description:</text>
<text x="205.75" y="306" font-size="7.75" fill="#1a1a1a" textLength="40.75" lengthAdjust="spacingAndGlyphs" font-weight="bold" stroke="#1a1a1a" stroke-width="0.16">eTMF Code:</text>
<text x="249.25" y="306" font-size="8" fill="#1c1c1c" textLength="29.50" lengthAdjust="spacingAndGlyphs" stroke="#1c1c1c" stroke-width="0.14">10.01.01</text>
<text x="414.00" y="273" font-size="7.75" fill="#1a1a1a" textLength="57.75" lengthAdjust="spacingAndGlyphs" font-weight="bold" stroke="#1a1a1a" stroke-width="0.16">Document Name</text>
<text x="532.50" y="264" font-size="7.75" fill="#1a1a1a" textLength="13.90" lengthAdjust="spacingAndGlyphs" font-weight="bold" stroke="#1a1a1a" stroke-width="0.16">Max</text>
<text x="528.00" y="273" font-size="7.75" fill="#1a1a1a" textLength="22.20" lengthAdjust="spacingAndGlyphs" font-weight="bold" stroke="#1a1a1a" stroke-width="0.16">Copies</text>
<text x="560.75" y="264" font-size="7.75" fill="#1a1a1a" textLength="16.50" lengthAdjust="spacingAndGlyphs" font-weight="bold" stroke="#1a1a1a" stroke-width="0.16">Auto</text>
<text x="562.50" y="273" font-size="7.75" fill="#1a1a1a" textLength="13.00" lengthAdjust="spacingAndGlyphs" font-weight="bold" stroke="#1a1a1a" stroke-width="0.16">Add</text>
<text x="584.50" y="273" font-size="7.75" fill="#1a1a1a" textLength="31.00" lengthAdjust="spacingAndGlyphs" font-weight="bold" stroke="#1a1a1a" stroke-width="0.16">Required</text>
<text x="626.00" y="264" font-size="7.75" fill="#1a1a1a" textLength="27.00" lengthAdjust="spacingAndGlyphs" font-weight="bold" stroke="#1a1a1a" stroke-width="0.16">Sponsor</text>
<text x="622.50" y="273" font-size="7.75" fill="#1a1a1a" textLength="35.00" lengthAdjust="spacingAndGlyphs" font-weight="bold" stroke="#1a1a1a" stroke-width="0.16">Document</text>
<text x="673.75" y="264" font-size="7.75" fill="#1a1a1a" textLength="12.50" lengthAdjust="spacingAndGlyphs" font-weight="bold" stroke="#1a1a1a" stroke-width="0.16">Site</text>
<text x="662.75" y="273" font-size="7.75" fill="#1a1a1a" textLength="34.75" lengthAdjust="spacingAndGlyphs" font-weight="bold" stroke="#1a1a1a" stroke-width="0.16">Document</text>
<text x="403.00" y="288" font-size="8" fill="#1c1c1c" textLength="3.50" lengthAdjust="spacingAndGlyphs" stroke="#1c1c1c" stroke-width="0.14">1</text>
<text x="414.00" y="288" font-size="8" fill="#1c1c1c" textLength="80.25" lengthAdjust="spacingAndGlyphs" stroke="#1c1c1c" stroke-width="0.14">Data Management Plan</text>
<text x="522.00" y="288" font-size="8" fill="#1c1c1c" textLength="33.75" lengthAdjust="spacingAndGlyphs" stroke="#1c1c1c" stroke-width="0.14">Unlimited</text>
<text x="592.10" y="481" font-size="7.75" fill="#4a78c0" textLength="34.10" lengthAdjust="spacingAndGlyphs" font-weight="bold">Auto Save</text>
<text x="654.00" y="482" font-size="8" fill="#fff" textLength="46.25" lengthAdjust="spacingAndGlyphs" font-weight="bold" stroke="#fff" stroke-width="0.15">Save Changes</text>
<text x="726.75" y="482" font-size="8" fill="#fff" textLength="21.75" lengthAdjust="spacingAndGlyphs" font-weight="bold" stroke="#fff" stroke-width="0.15">Cancel</text>
</svg>
</div>
</body></html>
